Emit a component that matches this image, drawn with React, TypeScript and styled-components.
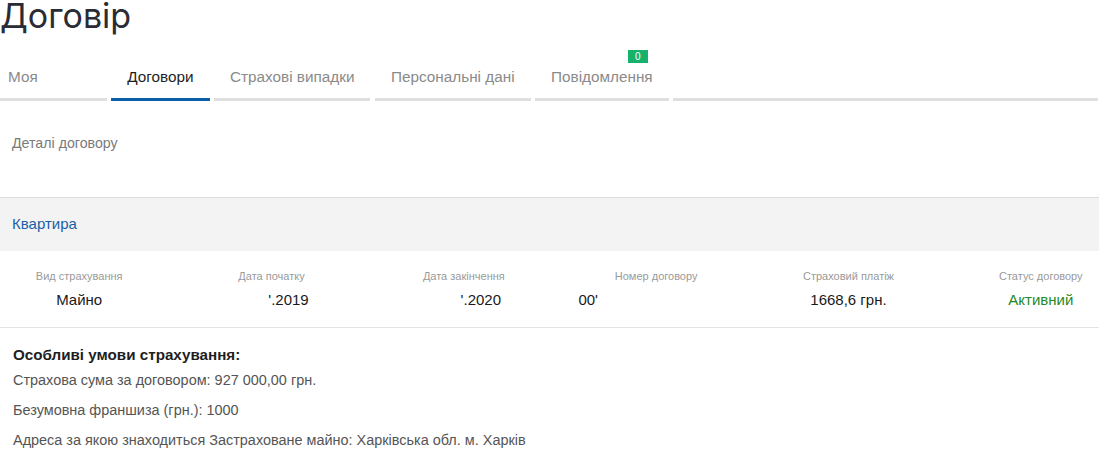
import React from "react";
import styled, { createGlobalStyle } from "styled-components";

const GlobalStyle = createGlobalStyle`
  html, body {
    margin: 0;
    padding: 0;
    background: #fff;
    overflow-x: hidden;
  }
  body {
    font-family: "Liberation Sans", Arial, sans-serif;
  }
`;

const Page = styled.div`
  width: 1099px;
`;

const Title = styled.h1`
  margin: -1px 0 24px;
  font-family: Inter, "Open Sans", sans-serif;
  font-weight: 400;
  font-size: 34px;
  line-height: 1;
  color: #2b2b36;
`;

const Tabs = styled.div`
  display: flex;
  gap: 4.5px;
  margin-left: -8px;
`;

const Tab = styled.div<{ $active?: boolean }>`
  position: relative;
  padding: 10px 16px 11px;
  font-size: 15.3px;
  line-height: 20px;
  white-space: nowrap;
  color: ${(p) => (p.$active ? "#1e1e1e" : "#8a8a8a")};
  border-bottom: 3px solid ${(p) => (p.$active ? "#0a5fa9" : "#dfdfdf")};
`;

const TabFiller = styled.div`
  flex: 1;
  margin-right: 1px;
  border-bottom: 3px solid #dfdfdf;
`;

const Badge = styled.span`
  position: absolute;
  top: -7px;
  right: 21px;
  min-width: 20px;
  height: 13px;
  background: #16b26b;
  color: #fff;
  font-size: 10px;
  line-height: 13px;
  text-align: center;
`;

const Redacted = styled.span<{ $w: number }>`
  display: inline-block;
  width: ${(p) => p.$w}px;
  height: 1em;
  vertical-align: middle;
  background: #fff;
`;

const DetailsHeader = styled.div`
  padding: 32px 12px 44px;
  font-size: 14.2px;
  line-height: 20px;
  color: #7a7a7a;
`;

const ObjectBand = styled.div`
  border-top: 1px solid #dcdcdc;
  background: #f3f3f3;
  padding: 16px 12px 17px;
  font-size: 15px;
  line-height: 20px;
  color: #1a5ea8;
`;

const InfoGrid = styled.div`
  display: grid;
  grid-template-columns: repeat(6, 1fr);
  width: calc(100% + 55px);
  margin-left: -17px;
  padding: 18px 0 17px;
  border-bottom: 1px solid #e3e3e3;
`;

const InfoCell = styled.div`
  display: flex;
  flex-direction: column;
  align-items: center;
  gap: 7px;
`;

const Label = styled.div`
  font-size: 11px;
  line-height: 14px;
  color: #9a9a9a;
`;

const Value = styled.div<{ $color?: string }>`
  font-size: 15px;
  line-height: 20px;
  white-space: nowrap;
  color: ${(p) => p.$color ?? "#1a1a1a"};
`;

const Conditions = styled.div`
  padding: 17px 13px 0;
  display: flex;
  flex-direction: column;
  gap: 10px;
`;

const ConditionsTitle = styled.div`
  font-size: 15.2px;
  font-weight: 700;
  line-height: 20px;
  color: #1e1e1e;
  margin-bottom: -5px;
`;

const ConditionLine = styled.div`
  font-size: 14.45px;
  line-height: 20px;
  color: #555;
`;

const info = [
  { label: "Вид страхування", value: <Value>Майно</Value> },
  {
    label: "Дата початку",
    value: (
      <Value>
        <Redacted $w={34} />'.2019
      </Value>
    ),
  },
  {
    label: "Дата закінчення",
    value: (
      <Value>
        <Redacted $w={34} />'.2020
      </Value>
    ),
  },
  {
    label: "Номер договору",
    value: (
      <Value>
        00'
        <Redacted $w={136} />
      </Value>
    ),
  },
  { label: "Страховий платіж", value: <Value>1668,6 грн.</Value> },
  {
    label: "Статус договору",
    value: <Value $color="#1f8a1f">Активний</Value>,
  },
];

const App: React.FC = () => {
  return (
    <Page>
      <GlobalStyle />
      <Title>Договір</Title>

      <Tabs>
        <Tab>
          Моя
          <Redacted $w={53} />
        </Tab>
        <Tab $active>Договори</Tab>
        <Tab>Страхові випадки</Tab>
        <Tab>Персональні дані</Tab>
        <Tab>
          Повідомлення
          <Badge>0</Badge>
        </Tab>
        <TabFiller />
      </Tabs>

      <DetailsHeader>Деталі договору</DetailsHeader>

      <ObjectBand>Квартира</ObjectBand>

      <InfoGrid>
        {info.map((item) => (
          <InfoCell key={item.label}>
            <Label>{item.label}</Label>
            {item.value}
          </InfoCell>
        ))}
      </InfoGrid>

      <Conditions>
        <ConditionsTitle>Особливі умови страхування:</ConditionsTitle>
        <ConditionLine>Страхова сума за договором: 927 000,00 грн.</ConditionLine>
        <ConditionLine>Безумовна франшиза (грн.): 1000</ConditionLine>
        <ConditionLine>
          Адреса за якою знаходиться Застраховане майно: Харківська обл. м. Харків
        </ConditionLine>
      </Conditions>
    </Page>
  );
};

export default App;
